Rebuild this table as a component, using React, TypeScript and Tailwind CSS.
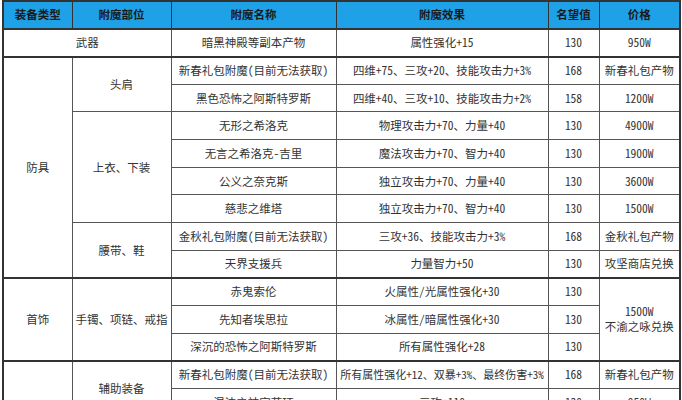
import React from "react"

type Row = {
  type?: { text: string; span: number; colSpan?: number }
  part?: { text: string; span: number }
  name: string
  effect: string
  fame: string
  price?: { text: React.ReactNode; span: number }
  groupStart?: boolean
}

const rows: Row[] = [
  {
    type: { text: "武器", span: 1, colSpan: 2 },
    name: "暗黑神殿等副本产物",
    effect: "属性强化+15",
    fame: "130",
    price: { text: "950W", span: 1 },
    groupStart: true,
  },
  {
    type: { text: "防具", span: 8 },
    part: { text: "头肩", span: 2 },
    name: "新春礼包附魔(目前无法获取)",
    effect: "四维+75、三攻+20、技能攻击力+3%",
    fame: "168",
    price: { text: "新春礼包产物", span: 1 },
    groupStart: true,
  },
  {
    name: "黑色恐怖之阿斯特罗斯",
    effect: "四维+40、三攻+10、技能攻击力+2%",
    fame: "158",
    price: { text: "1200W", span: 1 },
  },
  {
    part: { text: "上衣、下装", span: 4 },
    name: "无形之希洛克",
    effect: "物理攻击力+70、力量+40",
    fame: "130",
    price: { text: "4900W", span: 1 },
  },
  {
    name: "无言之希洛克-吉里",
    effect: "魔法攻击力+70、智力+40",
    fame: "130",
    price: { text: "1900W", span: 1 },
  },
  {
    name: "公义之奈克斯",
    effect: "独立攻击力+70、力量+40",
    fame: "130",
    price: { text: "3600W", span: 1 },
  },
  {
    name: "慈悲之维塔",
    effect: "独立攻击力+70、智力+40",
    fame: "130",
    price: { text: "1500W", span: 1 },
  },
  {
    part: { text: "腰带、鞋", span: 2 },
    name: "金秋礼包附魔(目前无法获取)",
    effect: "三攻+36、技能攻击力+3%",
    fame: "168",
    price: { text: "金秋礼包产物", span: 1 },
  },
  {
    name: "天界支援兵",
    effect: "力量智力+50",
    fame: "130",
    price: { text: "攻坚商店兑换", span: 1 },
  },
  {
    type: { text: "首饰", span: 3 },
    part: { text: "手镯、项链、戒指", span: 3 },
    name: "赤鬼索伦",
    effect: "火属性/光属性强化+30",
    fame: "130",
    price: {
      text: (
        <>
          1500W
          <br />
          不渝之咏兑换
        </>
      ),
      span: 3,
    },
    groupStart: true,
  },
  { name: "先知者埃思拉", effect: "冰属性/暗属性强化+30", fame: "130" },
  { name: "深沉的恐怖之阿斯特罗斯", effect: "所有属性强化+28", fame: "130" },
  {
    type: { text: "特殊装备", span: 4 },
    part: { text: "辅助装备", span: 2 },
    name: "新春礼包附魔(目前无法获取)",
    effect: "所有属性强化+12、双暴+3%、最终伤害+3%",
    fame: "168",
    price: { text: "新春礼包产物", span: 1 },
    groupStart: true,
  },
  {
    name: "混沌之神宫花环",
    effect: "三攻+110",
    fame: "130",
    price: { text: "950W", span: 1 },
  },
  {
    part: { text: "魔法石", span: 2 },
    name: "新春礼包附魔(目前无法获取)",
    effect: "所有属性强化+12、双暴+3%",
    fame: "168",
    price: { text: "新春礼包产物", span: 1 },
  },
  {
    name: "混沌之神宫魔石",
    effect: "三攻+110",
    fame: "130",
    price: { text: "950W", span: 1 },
  },
]

const headers = ["装备类型", "附魔部位", "附魔名称", "附魔效果", "名望值", "价格"]

export default function App() {
  const cell = "border border-[#555] text-center align-middle px-0 leading-[15px] whitespace-nowrap"
  return (
    <div
      className="h-[400px] w-[682px] overflow-hidden bg-white pl-[2px] text-[11.5px] text-[#333]"
      style={{
        fontFamily: '"Noto Sans Mono CJK SC", "Noto Sans CJK SC", "Liberation Sans", sans-serif',
      }}
    >
      <table className="w-[677px] table-fixed border-collapse border-2 border-[#333]">
        <colgroup>
          <col className="w-[69px]" />
          <col className="w-[99px]" />
          <col className="w-[165px]" />
          <col className="w-[212px]" />
          <col className="w-[51px]" />
          <col className="w-[81px]" />
        </colgroup>
        <thead>
          <tr className="h-[28px] bg-[#1ea1e6]">
            {headers.map((h) => (
              <th
                key={h}
                className="border border-[#333] border-b-2 text-center font-bold text-[#1a1a1a]"
              >
                {h}
              </th>
            ))}
          </tr>
        </thead>
        <tbody>
          {rows.map((r, i) => {
            const top = r.groupStart ? " border-t-2 border-t-[#333]" : ""
            const long = r.effect.length > 20 ? " text-[11px]" : ""
            return (
              <tr key={i} className="h-[27.67px]">
                {r.type && (
                  <td
                    rowSpan={r.type.span}
                    colSpan={r.type.colSpan}
                    className={cell + top}
                  >
                    {r.type.text}
                  </td>
                )}
                {r.part && (
                  <td rowSpan={r.part.span} className={cell + top}>
                    {r.part.text}
                  </td>
                )}
                <td className={cell + top}>{r.name}</td>
                <td className={cell + top + long}>{r.effect}</td>
                <td className={cell + top}>{r.fame}</td>
                {r.price && (
                  <td rowSpan={r.price.span} className={cell + top}>
                    {r.price.text}
                  </td>
                )}
              </tr>
            )
          })}
        </tbody>
      </table>
    </div>
  )
}
